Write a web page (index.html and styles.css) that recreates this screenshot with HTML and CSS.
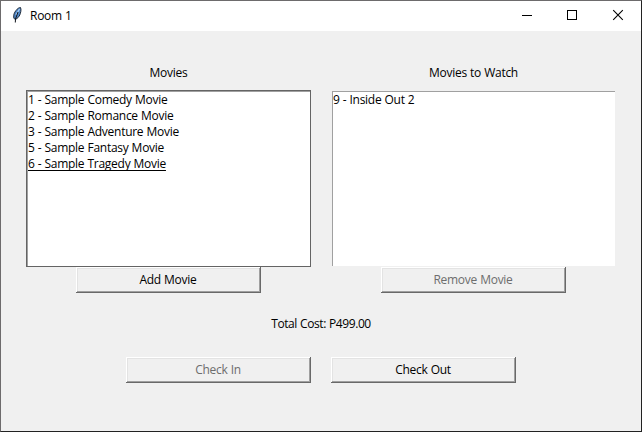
FILE: index.html
```html
<!DOCTYPE html>
<html lang="en">
<head>
<meta charset="utf-8">
<title>Room 1</title>
<link rel="stylesheet" href="styles.css">
</head>
<body>
<div class="window">
  <header class="titlebar">
    <svg class="feather" width="10" height="16" viewBox="0 0 10 16">
      <path d="M8.500 0.500C9.500 2.500 8.800 6 7.300 9L4.500 12L3 12.500L1.800 11C1.300 8 2.300 5.500 4 3.500C5.500 1.500 7 .5 8.500.5Z" fill="#4f86c6" stroke="#222c3a" stroke-width="1"/>
      <path d="M7.500 2L4 8" stroke="#a9cdf2" stroke-width="1.300" fill="none"/>
      <path d="M6 5L3.500 12L3.300 15.500" stroke="#10151c" stroke-width="1" fill="none"/>
    </svg>
    <h1 class="title">Room 1</h1>
    <div class="controls">
      <svg width="46" height="30" viewBox="0 0 46 30" shape-rendering="crispEdges"><path d="M18 14.500H28" stroke="#000"/></svg>
      <svg width="46" height="30" viewBox="0 0 46 30" shape-rendering="crispEdges"><rect x="17.500" y="9.500" width="9" height="9" fill="none" stroke="#000"/></svg>
      <svg width="46" height="30" viewBox="0 0 46 30"><path d="M17.200 9.200L26.800 18.800M26.800 9.200L17.200 18.800" stroke="#000" stroke-width="1.100"/></svg>
    </div>
  </header>
  <main class="content">
    <div class="columns">
      <section class="column">
        <h2 class="heading">Movies</h2>
        <ul class="listbox focused">
          <li>1 - Sample Comedy Movie</li>
          <li>2 - Sample Romance Movie</li>
          <li>3 - Sample Adventure Movie</li>
          <li>5 - Sample Fantasy Movie</li>
          <li><span class="active">6 - Sample Tragedy Movie</span></li>
        </ul>
        <button class="button">Add Movie</button>
      </section>
      <section class="column">
        <h2 class="heading">Movies to Watch</h2>
        <ul class="listbox">
          <li>9 - Inside Out 2</li>
        </ul>
        <button class="button" disabled>Remove Movie</button>
      </section>
    </div>
    <p class="total">Total Cost: P499.00</p>
    <div class="actions">
      <button class="button" disabled>Check In</button>
      <button class="button">Check Out</button>
    </div>
  </main>
</div>
</body>
</html>
```

FILE: styles.css
```css
* { box-sizing: border-box; }
body {
  margin: 0;
  font: 12px/16px "Open Sans", "Noto Sans", sans-serif;
  letter-spacing: -0.27px;
  word-spacing: 0.3px;
  color: #000;
}
.window {
  width: 642px;
  height: 432px;
  border: 1px solid #222;
  border-top-color: #6d6b6c;
  border-left-color: #6d6b6c;
  background: #f0f0f0;
  overflow: hidden;
}
.titlebar {
  display: flex;
  align-items: center;
  height: 30px;
  padding-left: 11px;
  background: #fff;
}
.feather { display: block; margin-top: -2px; }
.title { margin: 0 0 0 8px; font: inherit; }
.controls { display: flex; margin-left: auto; margin-right: -1px; }
.controls svg { display: block; }
.content { padding: 34px 0 0 25px; }
.columns { display: flex; gap: 20px; }
.column {
  display: flex;
  flex-direction: column;
  align-items: center;
  width: 285px;
}
.heading { margin: 0 0 9px; font: inherit; }
.listbox {
  width: 285px;
  height: 177px;
  margin: 0;
  padding: 0;
  list-style: none;
  border: 1px solid #f0f0f0;
  background: #fff;
  box-shadow: inset 1px 1px #a0a0a0;
}
.listbox.focused { border-color: #646464; }
.listbox li { height: 16px; padding-left: 1px; }
.listbox li:first-child { margin-top: 1px; }
.active {
  text-decoration: underline 1px;
  text-underline-offset: 2px;
  text-decoration-skip-ink: none;
}
.button {
  width: 185px;
  height: 26px;
  padding: 0 1px 0 0;
  border: 0;
  background: #f0f0f0;
  box-shadow: inset -1px -1px #696969, inset 1px 1px #fff, inset -2px -2px #a0a0a0, inset 2px 2px #e3e3e3;
  color: #000;
  font: inherit;
  letter-spacing: inherit;
  word-spacing: inherit;
}
.button:disabled { color: #6d6d6d; }
.total { width: 590px; margin: 23px 0 25px; text-align: center; letter-spacing: -0.4px; }
.actions { display: flex; gap: 20px; padding-left: 100px; }
```
